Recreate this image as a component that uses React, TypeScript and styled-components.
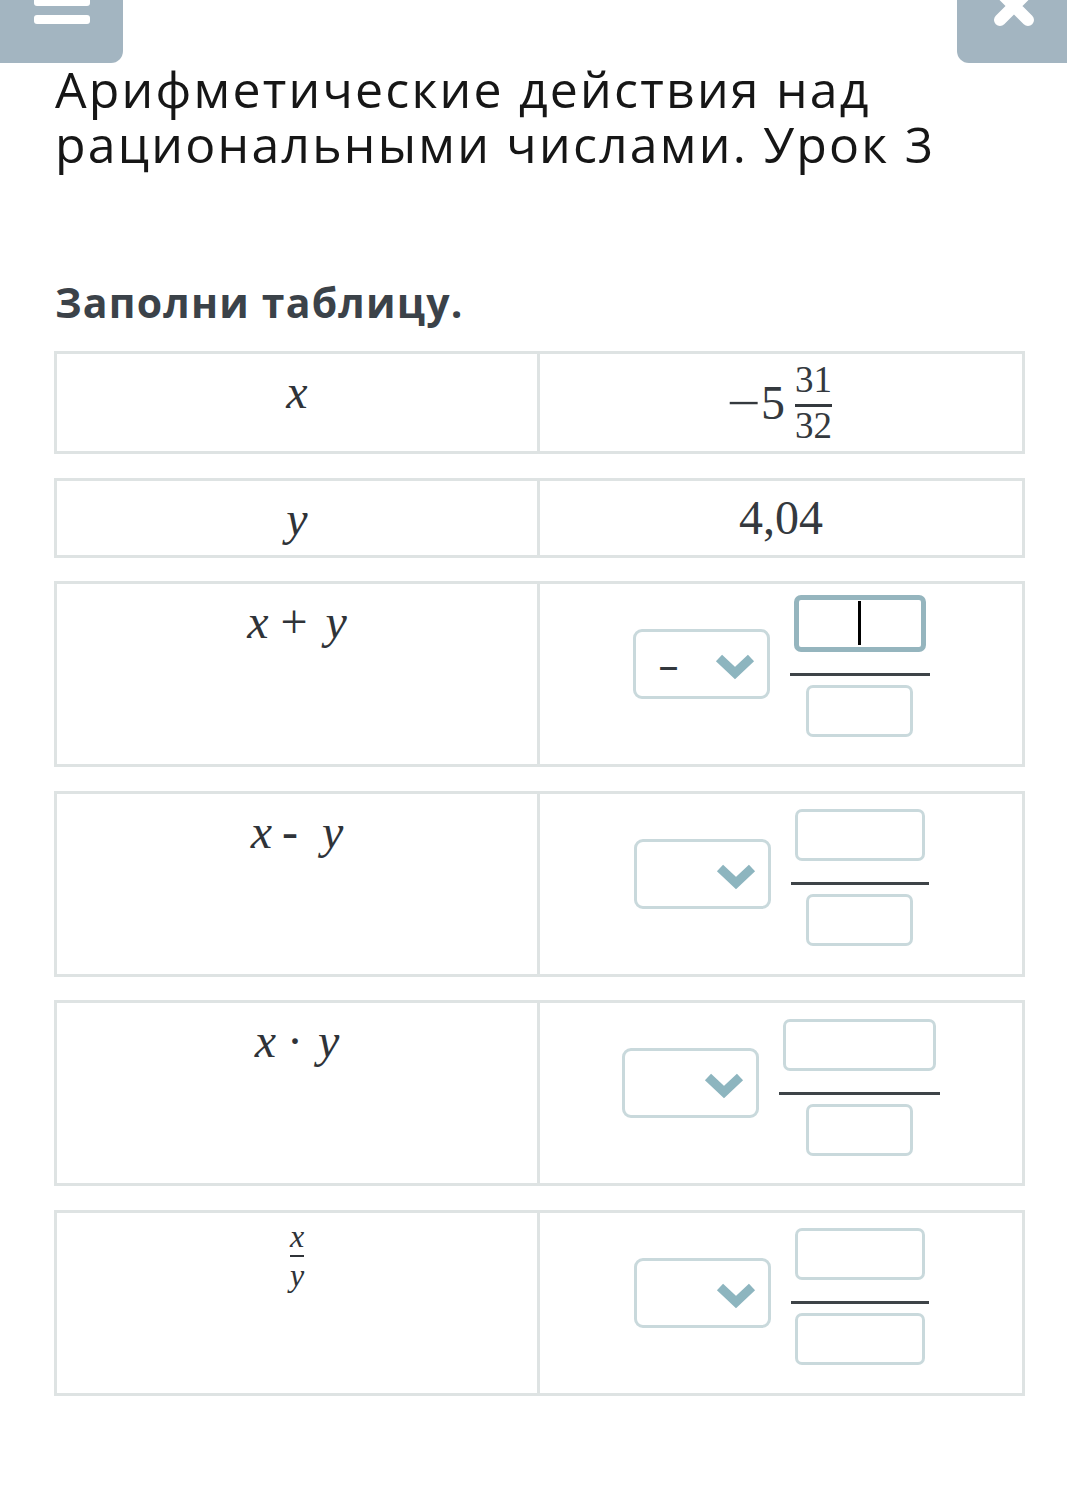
import React from 'react';
import styled, { createGlobalStyle } from 'styled-components';

const GlobalStyle = createGlobalStyle`
  html, body {
    margin: 0;
    padding: 0;
    background: #ffffff;
  }
  body {
    font-family: 'Open Sans', 'Noto Sans', sans-serif;
  }
`;

const Page = styled.div`
  width: 1067px;
  min-height: 1495px;
  background: #ffffff;
`;

const TopBar = styled.div`
  display: flex;
  justify-content: space-between;
  height: 63px;
`;

const HeaderButton = styled.div`
  height: 63px;
  background: #a3b5c1;
  overflow: hidden;

  svg {
    display: block;
  }
`;

const MenuButton = styled(HeaderButton)`
  width: 123px;
  border-bottom-right-radius: 12px;
`;

const CloseButton = styled(HeaderButton)`
  width: 110px;
  border-bottom-left-radius: 12px;
`;

const Content = styled.div`
  padding: 0 42px 0 55px;
`;

const Title = styled.h1`
  margin: -1px 0 0;
  font-size: 50px;
  font-weight: 400;
  letter-spacing: 2.2px;
  line-height: 55px;
  color: #161616;
`;

const Task = styled.h2`
  margin: 106px 0 0;
  font-size: 41px;
  font-weight: 700;
  letter-spacing: 1.2px;
  line-height: 49px;
  color: #3b4249;
`;

const Table = styled.div`
  display: flex;
  flex-direction: column;
  gap: 23.5px;
  margin-top: 24px;
  margin-left: -1px;
`;

const Row = styled.div<{ $height: number }>`
  display: grid;
  grid-template-columns: 480px 1fr;
  height: ${(p) => p.$height}px;
  border: 3px solid #dee3e3;
  box-sizing: border-box;
`;

const LeftCell = styled.div`
  padding-top: 9px;
  text-align: center;
  font-family: 'Liberation Serif', 'DejaVu Serif', serif;
  font-size: 48px;
  line-height: 57.6px;
  color: #2f3338;
`;

const Var = styled.span`
  font-style: italic;
`;

const Op = styled.span<{ $l: number; $r: number }>`
  margin: 0 ${(p) => p.$r}px 0 ${(p) => p.$l}px;
`;

const SmallFrac = styled.span`
  display: inline-flex;
  flex-direction: column;
  align-items: center;
  padding: 0 4px;
  font-size: 32px;
  line-height: 28px;
  vertical-align: top;
`;

const SmallBar = styled.span`
  align-self: stretch;
  height: 2px;
  margin: 5px 0 4px;
  background: #2f3338;
`;

const RightCell = styled.div`
  display: flex;
  align-items: center;
  justify-content: center;
  border-left: 3px solid #dee3e3;
  font-family: 'Liberation Serif', 'DejaVu Serif', serif;
  font-size: 48px;
  line-height: 57.6px;
  color: #34393e;
`;

const Minus = styled.span`
  margin-right: 4px;
  transform: scaleX(1.25);
`;

const MixedFrac = styled.span`
  display: inline-flex;
  flex-direction: column;
  align-items: center;
  margin-left: 10px;
  font-size: 37px;
  line-height: 36px;

  .bar {
    align-self: stretch;
    height: 3px;
    margin: 6px 0 1px;
    background: #34393e;
  }
`;

const Select = styled.div`
  display: flex;
  align-items: center;
  justify-content: space-between;
  width: 137px;
  height: 70px;
  box-sizing: border-box;
  padding: 0 12px 0 23px;
  margin: 0 20px 20px 0;
  border: 3px solid #c9d9dc;
  border-radius: 9px;

  .value {
    font-family: 'Open Sans', sans-serif;
    font-size: 40px;
    line-height: 1;
    color: #33383d;
  }

  svg {
    display: block;
    margin-top: 4px;
  }
`;

const Fraction = styled.div`
  display: flex;
  flex-direction: column;
`;

const TopHalf = styled.div`
  display: flex;
  align-items: flex-end;
  justify-content: center;
  height: 80px;
  box-sizing: border-box;
  padding: 0 4px 21px;
`;

const BottomHalf = styled.div`
  display: flex;
  align-items: flex-start;
  justify-content: center;
  height: 80px;
  box-sizing: border-box;
  padding: 9px 4px 0;
`;

const FracBar = styled.div`
  height: 3px;
  background: #3e4448;
`;

const AnswerBox = styled.div<{ $w: number; $focused?: boolean }>`
  display: flex;
  align-items: center;
  justify-content: center;
  width: ${(p) => (p.$focused ? p.$w + 2 : p.$w)}px;
  height: ${(p) => (p.$focused ? 57 : 52)}px;
  box-sizing: border-box;
  border: ${(p) => (p.$focused ? '5px solid #95b5be' : '3px solid #c9d9dc')};
  border-radius: 7px;
  background: #ffffff;
`;

const Caret = styled.span`
  width: 3px;
  height: 44px;
  background: #000000;
`;

const MenuIcon = () => (
  <svg width="123" height="63" viewBox="0 0 123 63">
    <rect x="34" y="-3" width="56" height="9" rx="3" fill="#ffffff" />
    <rect x="34" y="15" width="56" height="9" rx="3" fill="#ffffff" />
  </svg>
);

const CloseIcon = () => (
  <svg width="110" height="63" viewBox="0 0 110 63">
    <path d="M43 -8 L71 20 M71 -8 L43 20" stroke="#ffffff" strokeWidth="12" strokeLinecap="round" />
  </svg>
);

const Chevron = () => (
  <svg width="40" height="28" viewBox="0 0 40 28">
    <polyline points="4,6 20,21 36,6" fill="none" stroke="#8db5bf" strokeWidth="9" strokeLinejoin="miter" />
  </svg>
);

interface BoxSpec {
  w: number;
  focused?: boolean;
}

interface AnswerRow {
  left: React.ReactNode;
  sign?: string;
  num: BoxSpec;
  den: BoxSpec;
}

const rows: AnswerRow[] = [
  {
    left: (
      <>
        <Var>x</Var>
        <Op $l={12} $r={18}>+</Op>
        <Var>y</Var>
      </>
    ),
    sign: '–',
    num: { w: 130, focused: true },
    den: { w: 107 },
  },
  {
    left: (
      <>
        <Var>x</Var>
        <Op $l={10} $r={24}>-</Op>
        <Var>y</Var>
      </>
    ),
    num: { w: 130 },
    den: { w: 107 },
  },
  {
    left: (
      <>
        <Var>x</Var>
        <Op $l={11} $r={15}>·</Op>
        <Var>y</Var>
      </>
    ),
    num: { w: 153 },
    den: { w: 107 },
  },
  {
    left: (
      <SmallFrac>
        <Var>x</Var>
        <SmallBar />
        <Var>y</Var>
      </SmallFrac>
    ),
    num: { w: 130 },
    den: { w: 130 },
  },
];

const App: React.FC = () => {
  return (
    <Page>
      <GlobalStyle />
      <TopBar>
        <MenuButton>
          <MenuIcon />
        </MenuButton>
        <CloseButton>
          <CloseIcon />
        </CloseButton>
      </TopBar>

      <Content>
        <Title>Арифметические действия над рациональными числами. Урок 3</Title>
        <Task>Заполни таблицу.</Task>

        <Table>
          <Row $height={103}>
            <LeftCell>
              <Var>x</Var>
            </LeftCell>
            <RightCell>
              <Minus>−</Minus>
              <span>5</span>
              <MixedFrac>
                <span className="num">31</span>
                <span className="bar" />
                <span className="den">32</span>
              </MixedFrac>
            </RightCell>
          </Row>

          <Row $height={80}>
            <LeftCell>
              <Var>y</Var>
            </LeftCell>
            <RightCell>4,04</RightCell>
          </Row>

          {rows.map((row, i) => (
            <Row $height={186} key={i}>
              <LeftCell>{row.left}</LeftCell>
              <RightCell>
                <Select>
                  <span className="value">{row.sign}</span>
                  <Chevron />
                </Select>
                <Fraction>
                  <TopHalf>
                    <AnswerBox $w={row.num.w} $focused={row.num.focused}>
                      {row.num.focused && <Caret />}
                    </AnswerBox>
                  </TopHalf>
                  <FracBar />
                  <BottomHalf>
                    <AnswerBox $w={row.den.w} />
                  </BottomHalf>
                </Fraction>
              </RightCell>
            </Row>
          ))}
        </Table>
      </Content>
    </Page>
  );
};

export default App;
